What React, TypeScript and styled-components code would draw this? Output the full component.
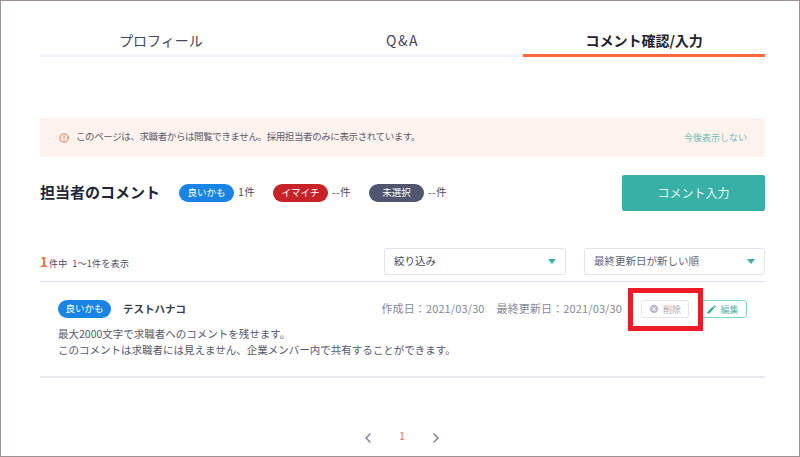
import React from 'react';
import styled, { createGlobalStyle } from 'styled-components';
import { CircleAlert, ChevronLeft, ChevronRight } from 'lucide-react';
import { MdCancel, MdEdit } from 'react-icons/md';

const TEAL = '#38b0a6';
const ORANGE = '#fb6a3c';
const BLUE = '#1a84e5';
const RED = '#c62228';
const SLATE = '#50566e';

const GlobalStyle = createGlobalStyle`
  html, body {
    margin: 0;
    padding: 0;
    background: #fff;
  }
  * {
    box-sizing: border-box;
  }
  body {
    font-family: "Noto Sans CJK JP", "Noto Sans", sans-serif;
    color: #3a3d4d;
  }
`;

const Page = styled.div`
  width: 800px;
  height: 457px;
  padding: 0 34px 0 39px;
  border: 1px solid #9c9292;
  overflow: hidden;
`;

const Tabs = styled.div`
  display: grid;
  grid-template-columns: repeat(3, 1fr);
  padding-top: 26px;
`;

const Tab = styled.div<{ $active?: boolean; $spaced?: boolean }>`
  height: 30px;
  line-height: 26px;
  text-align: center;
  font-size: 14px;
  font-weight: ${p => (p.$active ? 700 : 400)};
  letter-spacing: ${p => (p.$spaced ? '1.5px' : '0')};
  color: ${p => (p.$active ? '#1f2230' : '#44475a')};
  border-bottom: 3px solid ${p => (p.$active ? ORANGE : '#f1f2fa')};
`;

const Notice = styled.div`
  display: flex;
  align-items: center;
  height: 39px;
  margin-top: 61px;
  padding: 0 18px 0 19px;
  background: #fdf2ee;
`;

const NoticeIcon = styled(CircleAlert)`
  width: 10px;
  height: 10px;
  color: ${ORANGE};
  flex-shrink: 0;
`;

const NoticeText = styled.span`
  margin-left: 7px;
  padding-bottom: 4px;
  font-size: 9.5px;
  letter-spacing: -0.4px;
  color: #5a5d6d;
  flex: 1;
`;

const NoticeLink = styled.span`
  font-size: 9px;
  color: #6dbdb4;
`;

const Summary = styled.div`
  display: flex;
  align-items: center;
  height: 36px;
  margin-top: 18px;
`;

const Heading = styled.h2`
  margin: 0 18px 0 0;
  width: 121px;
  padding-bottom: 3px;
  font-size: 15px;
  font-weight: 700;
  color: #23263a;
  white-space: nowrap;
`;

const Pill = styled.span<{ $color: string }>`
  display: inline-block;
  width: 55px;
  height: 18px;
  line-height: 17px;
  border-radius: 9px;
  text-align: center;
  font-size: 9.5px;
  color: #fff;
  background: ${p => p.$color};
  flex-shrink: 0;
`;

const Count = styled.span<{ $width: number }>`
  width: ${p => p.$width}px;
  padding: 0 0 3px 4px;
  font-size: 10.5px;
  letter-spacing: 0.4px;
  color: #4a4d60;
  white-space: nowrap;
`;

const Spacer = styled.div`
  flex: 1;
`;

const PrimaryButton = styled.button`
  width: 143px;
  height: 36px;
  padding: 0 0 2px;
  border: none;
  border-radius: 2px;
  background: ${TEAL};
  color: #e4f5f3;
  font-family: inherit;
  font-size: 12px;
`;

const Toolbar = styled.div`
  display: flex;
  align-items: center;
  height: 27px;
  margin-top: 37px;
`;

const ResultCount = styled.div`
  flex: 1;
  font-size: 9px;
  letter-spacing: 0.3px;
  color: #4a4d60;
  white-space: pre;
`;

const ResultTotal = styled.span`
  font-size: 13px;
  font-weight: 700;
  color: ${ORANGE};
  margin-right: 1px;
`;

const Select = styled.div<{ $width: number; $muted?: boolean }>`
  display: flex;
  align-items: center;
  justify-content: space-between;
  width: ${p => p.$width}px;
  height: 27px;
  margin-left: 18px;
  padding: 0 9px 2px;
  border: 1px solid #e1e3ec;
  border-radius: 3px;
  font-size: 10.5px;
  color: ${p => (p.$muted ? '#63667a' : '#44475a')};
`;

const Caret = styled.span`
  width: 0;
  height: 0;
  margin-top: 2px;
  border-left: 4.5px solid transparent;
  border-right: 4.5px solid transparent;
  border-top: 5px solid ${TEAL};
`;

const Card = styled.div`
  height: 97px;
  margin-top: 6px;
  padding: 18px 18px 0;
  border-top: 1px solid #e1e3ec;
  border-bottom: 2px solid #e6e7ef;
`;

const CardHead = styled.div`
  display: flex;
  align-items: center;
  height: 18px;
`;

const CardPill = styled(Pill)`
  width: 53px;
`;

const Name = styled.span`
  margin-left: 12px;
  padding-bottom: 2px;
  font-size: 10.5px;
  font-weight: 700;
  color: #3a3d4d;
  flex: 1;
`;

const DateItem = styled.span`
  margin-left: 12px;
  padding-bottom: 2px;
  font-size: 11px;
  letter-spacing: 0.12px;
  color: #85889a;
  white-space: nowrap;
`;

const DeleteButton = styled.div`
  position: relative;
  display: flex;
  align-items: center;
  justify-content: center;
  gap: 4px;
  width: 48px;
  height: 18px;
  margin-left: 19px;
  border: 1px solid #e3e4ec;
  border-radius: 3px;
  font-size: 9px;
  color: #a2a5b3;
`;

const DeleteIcon = styled(MdCancel)`
  width: 10px;
  height: 10px;
  color: #b9bbc8;
`;

const Highlight = styled.div`
  position: absolute;
  left: -14px;
  top: -13px;
  width: 75px;
  height: 43px;
  border: 5px solid #ed1c24;
`;

const EditButton = styled.div`
  display: flex;
  align-items: center;
  justify-content: center;
  gap: 3px;
  width: 49px;
  height: 18px;
  margin-left: 9px;
  border: 1px solid #7fd0c7;
  border-radius: 3px;
  font-size: 9px;
  color: #5bb5ac;
`;

const EditIcon = styled(MdEdit)`
  width: 11px;
  height: 11px;
  color: ${TEAL};
`;

const Body = styled.p`
  margin: 8px 0 0;
  font-size: 10.5px;
  line-height: 16px;
  color: #55586a;
`;

const Pager = styled.div`
  display: grid;
  grid-template-columns: repeat(3, 34px);
  justify-content: center;
  justify-items: center;
  align-items: center;
  margin-top: 52px;
  padding-right: 1px;
  color: #7c8096;
`;

const PageNumber = styled.span`
  font-size: 10px;
  color: ${ORANGE};
  margin-top: -5px;
`;

const App: React.FC = () => (
  <>
    <GlobalStyle />
    <Page>
      <Tabs>
        <Tab>プロフィール</Tab>
        <Tab $spaced>Q&amp;A</Tab>
        <Tab $active>コメント確認/入力</Tab>
      </Tabs>
      <Notice>
        <NoticeIcon strokeWidth={2.4} />
        <NoticeText>このページは、求職者からは閲覧できません。採用担当者のみに表示されています。</NoticeText>
        <NoticeLink>今後表示しない</NoticeLink>
      </Notice>
      <Summary>
        <Heading>担当者のコメント</Heading>
        <Pill $color={BLUE}>良いかも</Pill>
        <Count $width={39}>1件</Count>
        <Pill $color={RED}>イマイチ</Pill>
        <Count $width={41}>--件</Count>
        <Pill $color={SLATE}>未選択</Pill>
        <Count $width={39}>--件</Count>
        <Spacer />
        <PrimaryButton>コメント入力</PrimaryButton>
      </Summary>
      <Toolbar>
        <ResultCount>
          <ResultTotal>1</ResultTotal>件中  1〜1件を表示
        </ResultCount>
        <Select $width={182}>
          絞り込み
          <Caret />
        </Select>
        <Select $width={181} $muted>
          最終更新日が新しい順
          <Caret />
        </Select>
      </Toolbar>
      <Card>
        <CardHead>
          <CardPill $color={BLUE}>良いかも</CardPill>
          <Name>テストハナコ</Name>
          <DateItem>作成日：2021/03/30</DateItem>
          <DateItem>最終更新日：2021/03/30</DateItem>
          <DeleteButton>
            <DeleteIcon />
            削除
            <Highlight />
          </DeleteButton>
          <EditButton>
            <EditIcon />
            編集
          </EditButton>
        </CardHead>
        <Body>
          最大2000文字で求職者へのコメントを残せます。
          <br />
          このコメントは求職者には見えません、企業メンバー内で共有することができます。
        </Body>
      </Card>
      <Pager>
        <ChevronLeft size={16} strokeWidth={2.2} />
        <PageNumber>1</PageNumber>
        <ChevronRight size={16} strokeWidth={2.2} />
      </Pager>
    </Page>
  </>
);

export default App;
